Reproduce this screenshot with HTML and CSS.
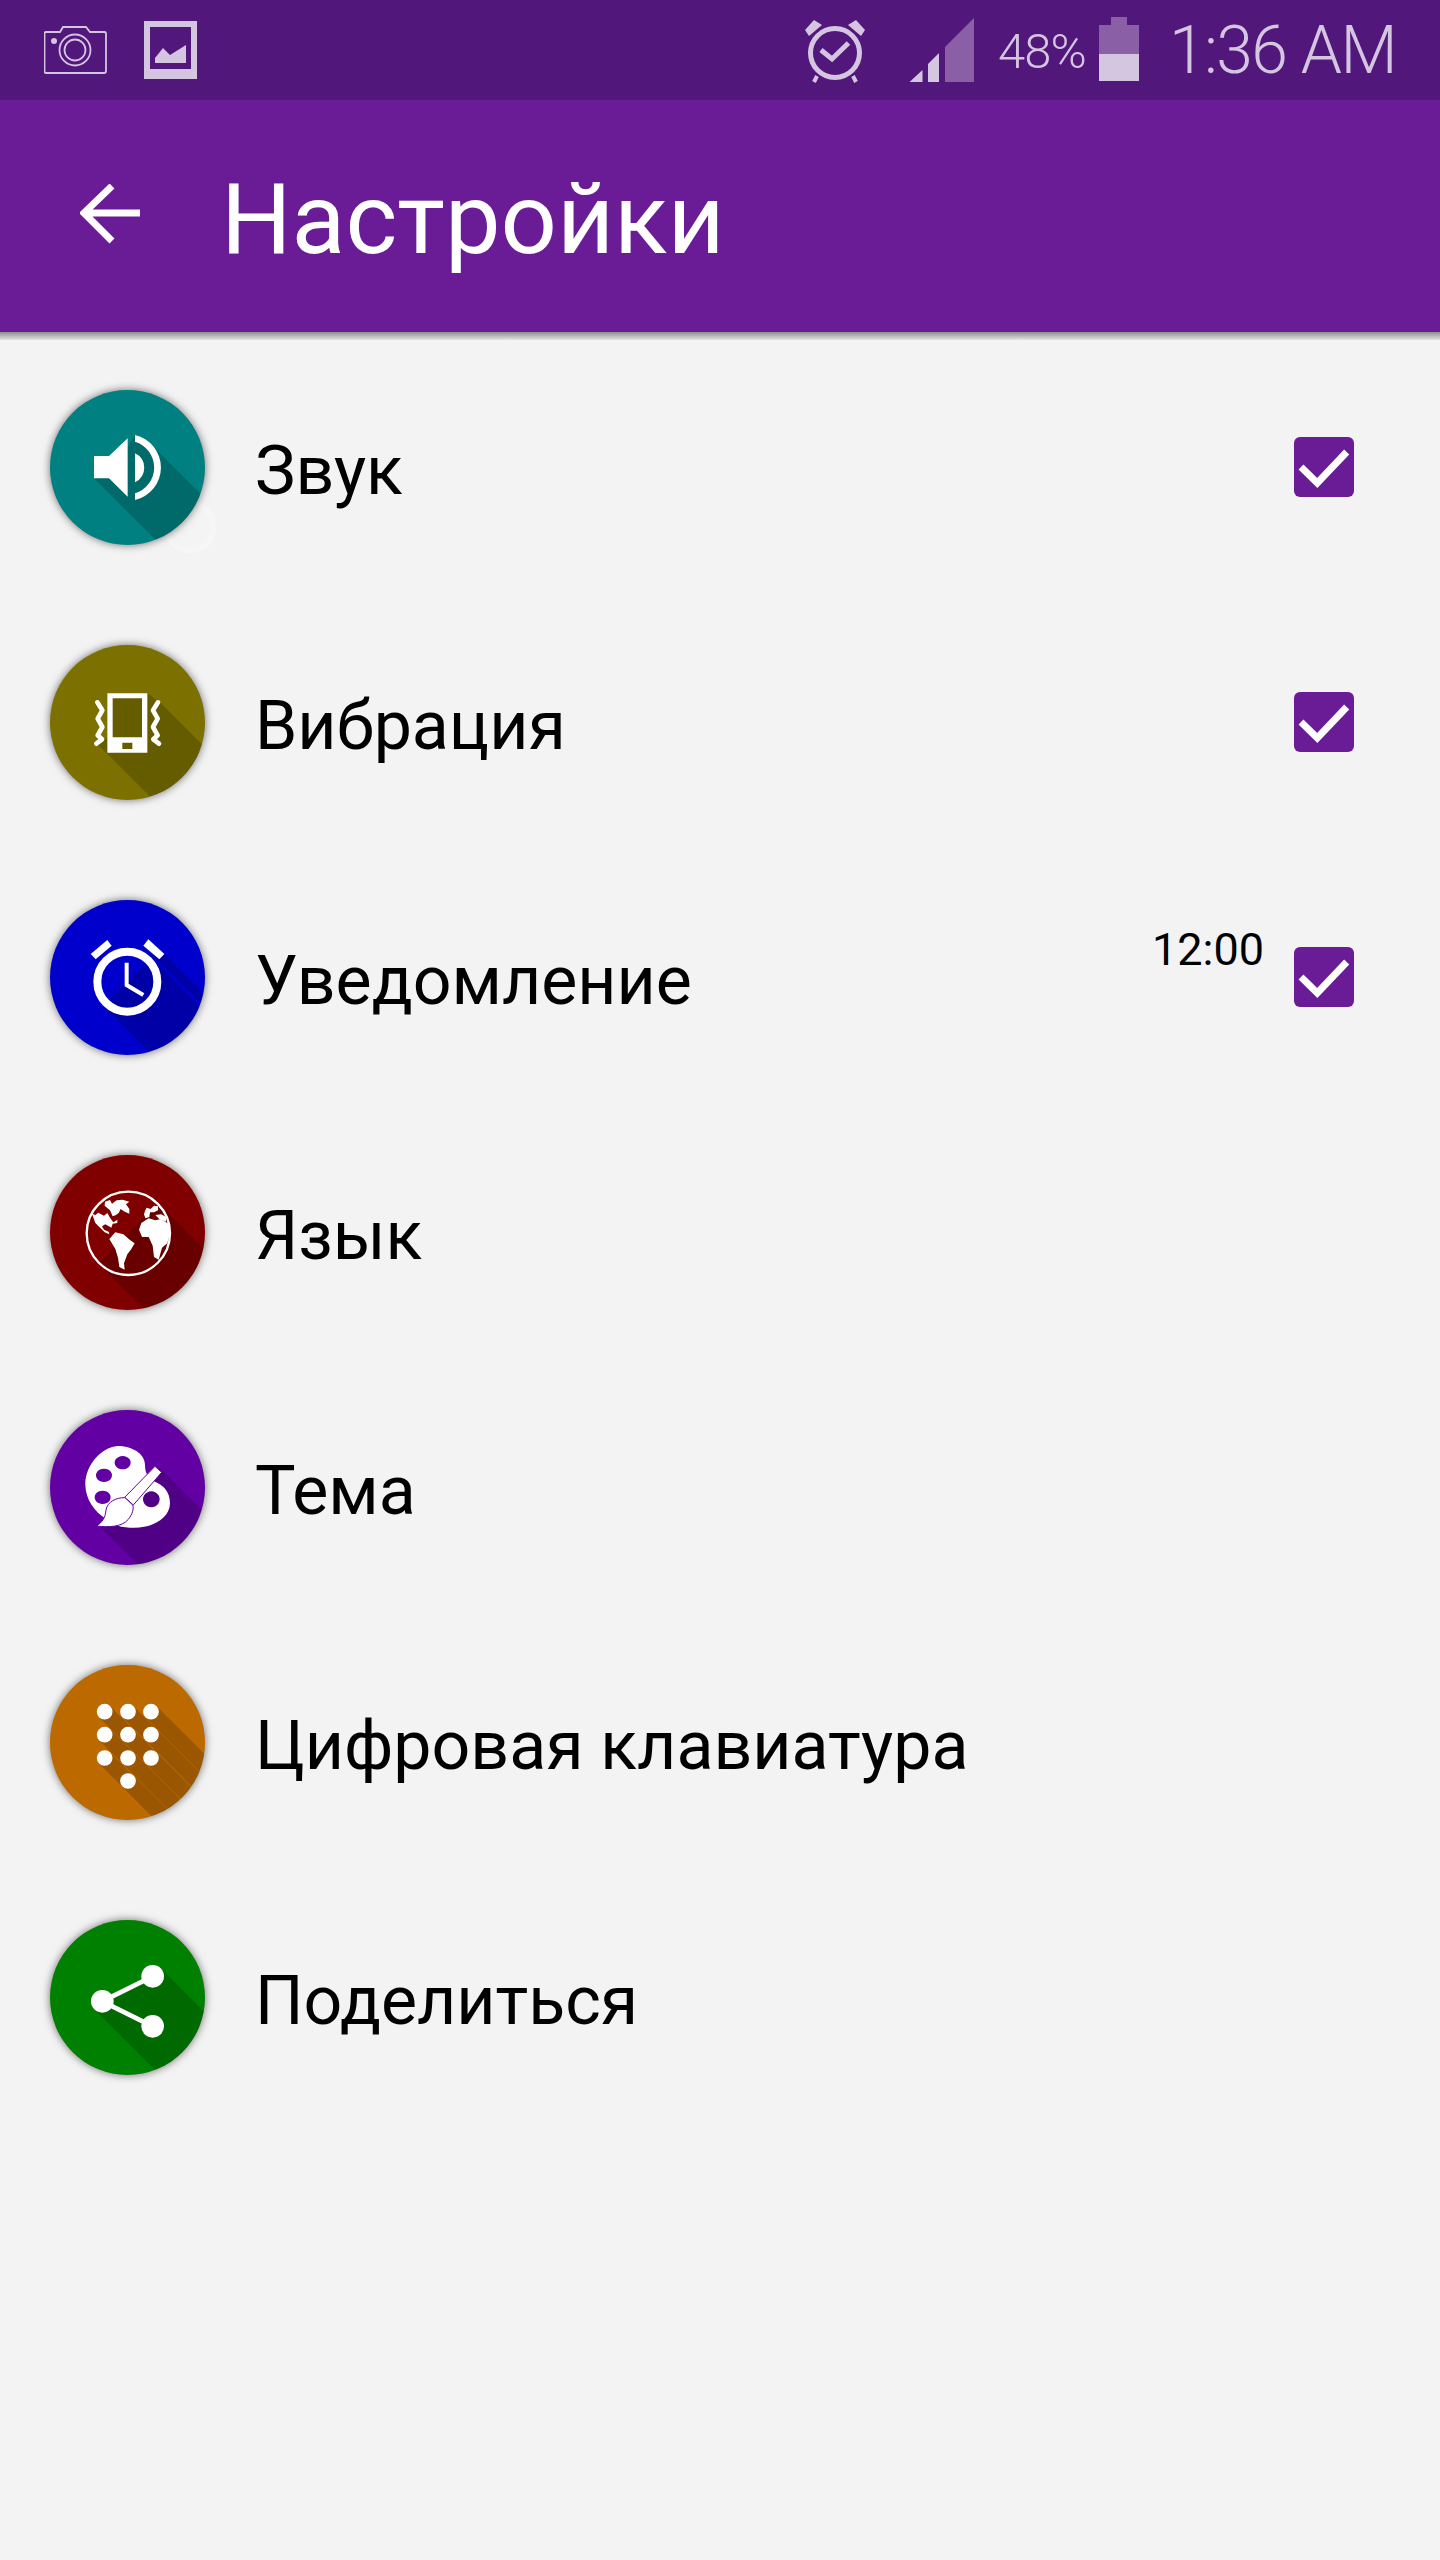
FILE: index.html
```html
<!DOCTYPE html>
<html lang="ru">

<head>
    <meta charset="UTF-8" />
    <title>Настройки</title>
    <meta name="viewport" content="width=device-width, initial-scale=1" />
    <link rel="stylesheet" href="styles.css">
</head>

<body>
    <div class="status-bar">
        <svg class="st-camera" viewBox="44 0 63 100">
            <path d="M46 32H60L63 27H86L90 32H104.500Q106 32 106 34V71Q106 73 104 73H46Q44.500 73 44.500 71V34Q44.500 32 46 32Z" fill="none" stroke="#d4c5e1" stroke-width="1.800" />
            <circle cx="75" cy="50" r="15.500" fill="none" stroke="#d4c5e1" stroke-width="1.800" />
            <circle cx="75" cy="50" r="10.500" fill="none" stroke="#d4c5e1" stroke-width="1.800" />
            <circle cx="54" cy="41" r="3" fill="#d4c5e1" />
        </svg>
        <svg class="st-gallery" viewBox="144 0 53 100">
            <path fill-rule="evenodd" d="M144 21H197V79H144ZM150 27V69H191V27Z" fill="#d4c5e1" />
            <polygon points="155,63 155,58 163,48 170,55 186,45 186,63" fill="#d4c5e1" />
        </svg>

        <svg class="st-alarm" viewBox="806 0 60 100">
            <circle cx="836" cy="53" r="24.500" fill="none" stroke="#d4c5e1" stroke-width="5" />
            <polygon points="806,30 815,20 823,25 810,36" fill="#d4c5e1" />
            <polygon points="866,30 857,20 849,25 862,36" fill="#d4c5e1" />
            <path d="M818 76L815 82M854 76L857 82" stroke="#d4c5e1" stroke-width="4" />
            <polyline points="822,50 833,59 849.500,43" fill="none" stroke="#d4c5e1" stroke-width="5" />
        </svg>
        <svg class="st-signal" viewBox="910 0 66 100">
            <polygon points="910.500,82 923.500,82 923.500,70" fill="#d4c5e1" />
            <polygon points="929,82 940,82 940,53 929,64" fill="#d4c5e1" />
            <polygon points="946,82 975,82 975,18 946,47" fill="#8a5fa5" />
        </svg>
        <span class="st-pct">48%</span>
        <div class="st-battery">
            <div class="st-battery-nub"></div>
            <div class="st-battery-empty"></div>
            <div class="st-battery-full"></div>
        </div>
        <span class="st-time">1:36 AM</span>
    </div>

    <div class="toolbar">
        <svg class="back" viewBox="0 0 60 60">
            <path d="M60 29H5M32 2L4 29L32 57" fill="none" stroke="#fff" stroke-width="7" />
        </svg>
        <h1>Настройки</h1>
    </div>
    <div class="toolbar-shade"></div>

    <div class="list">
        <div class="row">
            <div class="touch-glow"></div>
            <div class="badge teal">
                <svg viewBox="60 60 465 465">
                    <polygon class="sh" points="192,325 237,290 293,230 315,195 358,218 758,618 592,725" />
                    <polygon class="ic" points="192,258 237,258 293,205 293,380 237,325 192,325" />
                    <path class="ic" d="M315 195A100 100 0 0 1 315 390V370A81 81 0 0 0 315 215ZM315 250A48 48 0 0 1 315 337Z" />
                </svg>
            </div>
            <span class="label">Звук</span>
            <div class="check"><svg viewBox="0 0 60 60"><polyline points="7,30 23.300,46 52.700,15" /></svg></div>
        </div>

        <div class="row">
            <div class="badge olive">
                <svg viewBox="60 60 465 465">
                    <polygon class="sh" points="195,350 232,340 232,205 352,205 390,232 790,632 595,750" />
                    <path class="ic" fill-rule="evenodd" d="M232 205H352V383H232ZM248 220V337H336V220ZM277 353V372H307V353Z" />
                    <polyline class="line" points="202,232 217,256 203,281 217,306 203,331 216,343 199,356" />
                    <polyline class="line" points="384,232 369,256 383,281 369,306 383,331 370,343 387,356" />
                </svg>
            </div>
            <span class="label">Вибрация</span>
            <div class="check"><svg viewBox="0 0 60 60"><polyline points="7,30 23.300,46 52.700,15" /></svg></div>
        </div>

        <div class="row">
            <div class="badge blue">
                <svg viewBox="60 60 465 465">
                    <g class="sh">
                        <polygon points="364,233 764,633 620,777 220,377" />
                        <polygon points="340,197 403,222 803,622 740,597" />
                    </g>
                    <circle cx="292" cy="305" r="90" fill="none" stroke="#fff" stroke-width="24" />
                    <polyline class="line thin" points="290,248 290,315 340,345" />
                    <polygon class="ic" points="182,222 232,180 245,197 197,238" />
                    <polygon class="ic" points="403,222 355,178 340,197 388,238" />
                </svg>
            </div>
            <span class="label">Уведомление</span>
            <span class="alarm-time">12:00</span>
            <div class="check with-time"><svg viewBox="0 0 60 60"><polyline points="7,30 23.300,46 52.700,15" /></svg></div>
        </div>

        <div class="row">
            <div class="badge red">
                <svg viewBox="60 60 465 465">
                    <polygon class="sh" points="385,205 785,605 605,785 205,385" />
                    <circle cx="295" cy="295" r="125" fill="none" stroke="#fff" stroke-width="7" />
                    <path class="ic" d="M186 236L196 240L205 233L222 242L232 234L240 248L250 262L262 254L262 264L248 266L244 278L226 268L216 274L222 284L236 290L238 298L224 292L208 276L196 264Z" />
                    <path class="ic" d="M225 200L240 195L246 206L260 196L278 194L298 200L288 208L298 222L298 236L284 230L272 222L266 234L258 240L248 244L240 226L224 212Z" />
                    <path class="ic" d="M238 312L256 292L280 298L300 315L314 325L304 342L292 358L282 385L284 404L268 396L264 368L256 342Z" />
                    <path class="ic" d="M327 284L334 264L356 250L376 256L392 252L408 262L420 268L419 300L412 325L396 338L386 374L372 366L368 332L356 306L336 306Z" />
                    <path class="ic" d="M345 228L350 218L362 222L372 212L384 214L384 226L372 232L360 232L358 246L346 250L342 238Z" />
                    <path class="ic" d="M376 240L394 238L408 246L408 260L388 252Z" />
                </svg>
            </div>
            <span class="label">Язык</span>
        </div>

        <div class="row">
            <div class="badge violet">
                <svg viewBox="60 60 465 465">
                    <polygon class="sh" points="210,410 390,235 790,635 610,810" />
                    <path class="ic" fill-rule="evenodd" d="M262 168C215 172 165 225 166 285C167 330 195 365 225 385C250 405 270 412 300 413C355 418 420 390 420 340C420 305 400 285 375 275C355 265 345 250 345 225C345 190 305 168 262 168ZM278 198A24 20 0 1 1 277.900 198ZM222 236A24 20 0 1 1 221.900 236ZM218 302A24 20 0 1 1 217.900 302ZM364 304A25 24 0 1 1 363.900 304Z" />
                    <path class="brush" d="M284 322L375 229L395 247L310 345Z" />
                    <path class="brush" d="M285 323C260 322 232 335 228 360C226 385 215 398 200 408C235 412 275 412 295 388C308 372 312 355 308 345Z" />
                </svg>
            </div>
            <span class="label">Тема</span>
        </div>

        <div class="row">
            <div class="badge orange">
                <svg viewBox="60 60 465 465">
                    <g class="sh-lines">
                        <line x1="363" y1="200" x2="763" y2="600" />
                        <line x1="294" y1="200" x2="694" y2="600" />
                        <line x1="224" y1="200" x2="624" y2="600" />
                        <line x1="224" y1="269" x2="624" y2="669" />
                        <line x1="224" y1="339" x2="624" y2="739" />
                        <line x1="294" y1="408" x2="694" y2="808" />
                    </g>
                    <g class="ic">
                        <circle cx="224" cy="200" r="23.500" />
                        <circle cx="294" cy="200" r="23.500" />
                        <circle cx="363" cy="200" r="23.500" />
                        <circle cx="224" cy="269" r="23.500" />
                        <circle cx="294" cy="269" r="23.500" />
                        <circle cx="363" cy="269" r="23.500" />
                        <circle cx="224" cy="339" r="23.500" />
                        <circle cx="294" cy="339" r="23.500" />
                        <circle cx="363" cy="339" r="23.500" />
                        <circle cx="294" cy="408" r="23.500" />
                    </g>
                </svg>
            </div>
            <span class="label">Цифровая клавиатура</span>
        </div>

        <div class="row">
            <div class="badge green">
                <svg viewBox="60 60 465 465">
                    <g class="sh">
                        <polygon points="392,205 792,605 696,701 296,301" />
                        <polygon points="193,328 241,280 641,680 593,728" />
                        <polygon points="344,403 392,355 792,755 744,803" />
                        <polygon points="217,304 368,229 768,629 617,704" />
                        <polygon points="217,304 368,379 768,779 617,704" />
                    </g>
                    <polyline class="line" points="368,229 217,304 368,379" />
                    <g class="ic">
                        <circle cx="368" cy="229" r="34" />
                        <circle cx="217" cy="304" r="34" />
                        <circle cx="368" cy="379" r="34" />
                    </g>
                </svg>
            </div>
            <span class="label">Поделиться</span>
        </div>
    </div>
</body>

</html>
```

FILE: styles.css
```css
body {
    font-family: Roboto, "Noto Sans", sans-serif;
    margin: 0;
    min-height: 2560px;
    background: #f3f3f3;
    color: #000;
}

svg {
    display: block;
}

/* Status bar */
.status-bar {
    display: flex;
    align-items: center;
    height: 100px;
    padding: 0 44px 0 44px;
    background: #52177a;
    color: #d4c5e1;
}

.status-bar svg {
    height: 100px;
    flex: none;
}

.st-camera {
    width: 63px;
}

.st-gallery {
    width: 53px;
    margin-left: 37px;
}

.st-alarm {
    width: 60px;
    margin-left: auto;
}

.st-signal {
    width: 66px;
    margin-left: 44px;
}

.st-pct {
    width: 88px;
    margin-left: 23px;
    margin-top: 2px;
    font-size: 49px;
    letter-spacing: -1px;
    font-weight: 300;
    white-space: nowrap;
}

.st-battery {
    width: 40px;
    height: 64px;
    margin-top: -2px;
    margin-left: 13px;
    display: flex;
    flex-direction: column;
    align-items: center;
}

.st-battery-nub {
    width: 16px;
    height: 8px;
    background: #8a5fa5;
}

.st-battery-empty {
    width: 40px;
    height: 29px;
    background: #8a5fa5;
}

.st-battery-full {
    width: 40px;
    height: 27px;
    background: #d4c5e1;
}

.st-time {
    margin-left: 30px;
    font-size: 66px;
    font-weight: 300;
    letter-spacing: -1.600px;
    white-space: nowrap;
}

/* Toolbar */
.toolbar {
    display: flex;
    align-items: center;
    height: 232px;
    padding-left: 80px;
    background: #6a1b96;
    box-sizing: border-box;
}

.back {
    width: 60px;
    height: 60px;
    margin-top: -4px;
}

.toolbar h1 {
    margin: 6px 0 0 81px;
    font-size: 99px;
    font-weight: 400;
    color: #fff;
}

.toolbar-shade {
    height: 8px;
    background: linear-gradient(#8e8e8e, #e4e4e4);
}

/* Settings rows */
.row {
    position: relative;
    display: flex;
    align-items: center;
    height: 255px;
    padding: 0 86px 0 50px;
}

.badge {
    position: relative;
    z-index: 1;
    width: 155px;
    height: 155px;
    flex: none;
    overflow: hidden;
    border-radius: 50%;
    box-shadow: 0 0 9px rgba(0, 0, 0, 0.55);
}

.badge svg {
    width: 155px;
    height: 155px;
}

.teal { background: #008080; }
.olive { background: #7c7100; }
.blue { background: #0000cc; }
.red { background: #800000; }
.violet { background: #6200a3; }
.orange { background: #bc6900; }
.green { background: #008000; }

.sh {
    fill: #000;
    opacity: 0.18;
}

.sh-lines {
    stroke: #000;
    stroke-width: 47;
    opacity: 0.18;
}

.ic {
    fill: #fff;
}

.line {
    fill: none;
    stroke: #fff;
    stroke-width: 14;
    stroke-linejoin: round;
    stroke-linecap: round;
}

.line.thin {
    stroke-width: 12;
    stroke-linecap: butt;
    stroke-linejoin: miter;
}

.brush {
    fill: #fff;
    stroke: #6200a3;
    stroke-width: 3;
}

.label {
    margin: 6px 0 0 50px;
    font-size: 68px;
    white-space: nowrap;
}

.check {
    width: 60px;
    height: 60px;
    margin: 0 0 2px auto;
    border-radius: 6px;
    background: #6a1b96;
}

.check.with-time {
    margin-left: 30px;
}

.check polyline {
    fill: none;
    stroke: #fff;
    stroke-width: 7;
}

.alarm-time {
    margin-left: auto;
    margin-bottom: 56px;
    font-size: 45px;
}

/* leftover touch ripple beside the first badge */
.touch-glow {
    position: absolute;
    left: 164px;
    top: 161px;
    width: 52px;
    height: 52px;
    border-radius: 50%;
    background: radial-gradient(circle, rgba(255, 255, 255, 0.1) 50%, rgba(255, 255, 255, 0.75));
}
```
